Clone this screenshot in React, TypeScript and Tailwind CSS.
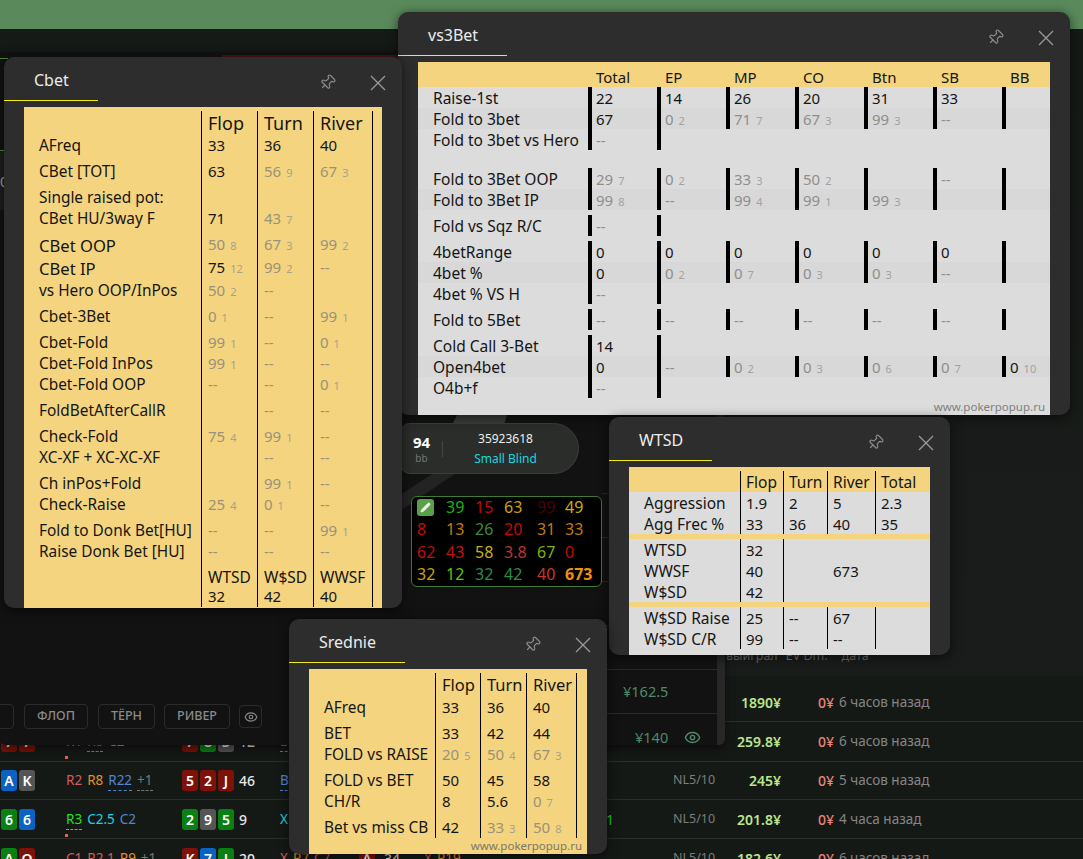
import { Eye, Pencil, Pin } from 'lucide-react';

type Stat = { v: string; s?: number; dim?: boolean } | null;
type Row = { label?: string; cells: Stat[]; gap?: boolean; big?: boolean; head?: string };

const v = (val: string): Stat => ({ v: val });
const d = (val: string, s?: number): Stat => ({ v: val, s, dim: true });
const dash = d('--');

const Close = () => (
  <svg width="16" height="16" viewBox="0 0 16 16" className="text-[#9a9a9a]">
    <path d="M1 1 15 15M15 1 1 15" stroke="currentColor" strokeWidth="1.3" fill="none" />
  </svg>
);

const Window = ({ title, className, children }: { title: string; className: string; children: React.ReactNode }) => (
  <div className={`absolute flex flex-col overflow-hidden rounded-[10px] bg-[#2d2d2d] shadow-[0_2px_12px_rgba(0,0,0,0.6)] ${className}`}>
    <div className="flex h-[44px] shrink-0 items-start justify-between">
      <div className="h-[44px] border-b border-[#f2ea1a] pt-[11px] pr-[29px] pl-[30px] text-[16px] leading-[24px] text-[#ececec]">{title}</div>
      <div className="flex items-center gap-[34px] pt-[17px] pr-[16px]">
        <Pin size={17} strokeWidth={1.6} className="rotate-45 text-[#8c8c8c]" />
        <Close />
      </div>
    </div>
    <div className="mx-[20px] mt-[6px] flex flex-1 flex-col overflow-hidden">{children}</div>
  </div>
);

const Value = ({ stat, gray }: { stat: Stat; gray?: boolean }) => {
  if (!stat) return null;
  const main = stat.dim ? (gray ? 'text-[#8e8e8e]' : 'text-[#98927a]') : 'text-[#151515]';
  return (
    <span className="text-[15px] whitespace-nowrap">
      <span className={main}>{stat.v}</span>
      {stat.s !== undefined && (
        <span className={`ml-[5px] text-[11px] ${gray ? 'text-[#a2a2a2]' : 'text-[#a9a28a]'}`}>{stat.s}</span>
      )}
    </span>
  );
};

/* yellow tables: Cbet and Srednie share the same row layout */
const StatTable = ({ rows, labelWidth, cols, children }: { rows: Row[]; labelWidth: string; cols: string[]; children?: React.ReactNode }) => (
  <div className="flex flex-1 flex-col bg-[#f4d47f] pt-[4px] text-[15.4px] leading-[21px] text-[#151515]">
    {rows.map((row, i) => {
      const gapClass = row.gap ? 'pt-[5px]' : '';
      const height = row.head
        ? 'h-[24px]'
        : row.big
          ? row.gap ? 'h-[28px]' : 'h-[23px]'
          : row.gap ? 'h-[26px]' : 'h-[21px]';
      return (
        <div key={i} className={`flex shrink-0 ${height}`}>
          <div className={`${labelWidth} shrink-0 pl-[15px] whitespace-nowrap ${gapClass} ${row.big ? 'text-[16.6px] leading-[23px]' : ''}`}>{row.label}</div>
          {row.cells.map((c, j) => (
            <div key={j} className={`${cols[j]} shrink-0 border-l border-black pl-[6px] whitespace-nowrap ${gapClass} ${row.head ?? ''}`}>
              {row.head ? c?.v : <Value stat={c} />}
            </div>
          ))}
          <div className="w-[11px] border-l border-black" />
        </div>
      );
    })}
    {children}
  </div>
);

const cbetRows: Row[] = [
  { cells: [v('Flop'), v('Turn'), v('River')], head: 'text-[18px] leading-[24px]' },
  { label: 'AFreq', cells: [v('33'), v('36'), v('40')] },
  { label: 'CBet [TOT]', cells: [v('63'), d('56', 9), d('67', 3)], gap: true },
  { label: 'Single raised pot:', cells: [null, null, null], gap: true },
  { label: 'CBet HU/3way F', cells: [v('71'), d('43', 7), null] },
  { label: 'CBet OOP', cells: [d('50', 8), d('67', 3), d('99', 2)], gap: true, big: true },
  { label: 'CBet IP', cells: [{ v: '75', s: 12 }, d('99', 2), dash], big: true },
  { label: 'vs Hero OOP/InPos', cells: [d('50', 2), dash, null] },
  { label: 'Cbet-3Bet', cells: [d('0', 1), dash, d('99', 1)], gap: true },
  { label: 'Cbet-Fold', cells: [d('99', 1), dash, d('0', 1)], gap: true },
  { label: 'Cbet-Fold InPos', cells: [d('99', 1), dash, dash] },
  { label: 'Cbet-Fold OOP', cells: [dash, dash, d('0', 1)] },
  { label: 'FoldBetAfterCallR', cells: [null, dash, dash], gap: true },
  { label: 'Check-Fold', cells: [d('75', 4), d('99', 1), dash], gap: true },
  { label: 'XC-XF + XC-XC-XF', cells: [null, dash, dash] },
  { label: 'Ch inPos+Fold', cells: [null, d('99', 1), dash], gap: true },
  { label: 'Check-Raise', cells: [d('25', 4), d('0', 1), dash] },
  { label: 'Fold to Donk Bet[HU]', cells: [dash, dash, d('99', 1)], gap: true },
  { label: 'Raise Donk Bet [HU]', cells: [dash, dash, dash] },
  { cells: [v('WTSD'), v('W$SD'), v('WWSF')], gap: true, head: 'text-[15.5px] leading-[21px]' },
  { cells: [v('32'), v('42'), v('40')] },
];

const srednieRows: Row[] = [
  { cells: [v('Flop'), v('Turn'), v('River')], head: 'text-[16.5px] leading-[24px]' },
  { label: 'AFreq', cells: [v('33'), v('36'), v('40')] },
  { label: 'BET', cells: [v('33'), v('42'), v('44')], gap: true },
  { label: 'FOLD vs RAISE', cells: [d('20', 5), d('50', 4), d('67', 3)] },
  { label: 'FOLD vs BET', cells: [v('50'), v('45'), v('58')], gap: true },
  { label: 'CH/R', cells: [v('8'), v('5.6'), d('0', 7)] },
  { label: 'Bet vs miss CB', cells: [v('42'), d('33', 3), d('50', 8)], gap: true },
];

/* ---- WTSD ---- */
const wtsdCols = ['w-[43px]', 'w-[44px]', 'w-[48px]', 'flex-1'];
const WtsdRow = ({ label, cells, lines = 4 }: { label?: string; cells: Stat[]; lines?: number }) => (
  <div className="flex h-[21px] leading-[23px]">
    <div className="w-[111px] shrink-0 pl-[15px]">{label}</div>
    {wtsdCols.map((w, j) => (
      <div key={j} className={`${w} border-l pl-[5px] ${j < lines ? 'border-black' : 'border-transparent'}`}>
        <Value stat={cells[j]} gray />
      </div>
    ))}
  </div>
);

const WtsdTable = () => (
  <div className="flex-1 bg-[#dcdcdc] text-[15.5px] leading-[21px] text-[#151515]">
    <div className="flex h-[25px] bg-[#f4d47f] pt-[4px] text-[15.5px] leading-[23px]">
      <div className="w-[111px] shrink-0" />
      {['Flop', 'Turn', 'River', 'Total'].map((h, j) => (
        <div key={h} className={`${wtsdCols[j]} border-l border-black pl-[5px]`}>{h}</div>
      ))}
    </div>
    <WtsdRow label="Aggression" cells={[v('1.9'), v('2'), v('5'), v('2.3')]} />
    <WtsdRow label="Agg Frec %" cells={[v('33'), v('36'), v('40'), v('35')]} />
    <div className="h-[5px] bg-[#f4d47f]" />
    <WtsdRow label="WTSD" cells={[v('32')]} lines={2} />
    <WtsdRow label="WWSF" cells={[v('40'), null, v('673')]} lines={2} />
    <WtsdRow label="W$SD" cells={[v('42')]} lines={2} />
    <div className="h-[5px] bg-[#f4d47f]" />
    <WtsdRow label="W$SD Raise" cells={[v('25'), v('--'), v('67')]} />
    <WtsdRow label="W$SD C/R" cells={[v('99'), v('--'), v('--')]} />
  </div>
);

/* ---- vs3Bet ---- */
type BetRow = { label: string; cells: Stat[]; bars?: number };
const betGroups: { rows: BetRow[]; mt: string }[] = [
  {
    mt: '',
    rows: [
      { label: 'Raise-1st', cells: [v('22'), v('14'), v('26'), v('20'), v('31'), v('33')] },
      { label: 'Fold to 3bet', cells: [v('67'), d('0', 2), d('71', 7), d('67', 3), d('99', 3), dash] },
      { label: 'Fold to 3bet vs Hero', cells: [dash], bars: 2 },
    ],
  },
  {
    mt: 'mt-[18px]',
    rows: [
      { label: 'Fold to 3Bet OOP', cells: [d('29', 7), d('0', 2), d('33', 3), d('50', 2), null, dash] },
      { label: 'Fold to 3Bet IP', cells: [d('99', 8), dash, d('99', 4), d('99', 1), d('99', 3)] },
    ],
  },
  { mt: 'mt-[5px]', rows: [{ label: 'Fold vs Sqz R/C', cells: [dash], bars: 2 }] },
  {
    mt: 'mt-[5px]',
    rows: [
      { label: '4betRange', cells: [v('0'), v('0'), v('0'), v('0'), v('0'), v('0')] },
      { label: '4bet %', cells: [v('0'), d('0', 2), d('0', 7), d('0', 3), d('0', 3), dash] },
      { label: '4bet % VS H', cells: [dash], bars: 2 },
    ],
  },
  { mt: 'mt-[5px]', rows: [{ label: 'Fold to 5Bet', cells: [dash, dash, dash, dash, dash, dash] }] },
  {
    mt: 'mt-[5px]',
    rows: [
      { label: 'Cold Call 3-Bet', cells: [v('14')], bars: 2 },
      { label: 'Open4bet', cells: [v('0'), dash, d('0', 2), d('0', 3), d('0', 6), d('0', 7), { v: '0', s: 10 }] },
      { label: 'O4b+f', cells: [dash], bars: 2 },
    ],
  },
];

const BetTable = () => (
  <div className="flex flex-1 flex-col bg-[#dcdcdc] text-[15.5px] leading-[23px] text-[#151515]">
    <div className="flex h-[25px] bg-[#f4d47f] pt-[4px] text-[15px]">
      <div className="w-[178px] shrink-0" />
      {['Total', 'EP', 'MP', 'CO', 'Btn', 'SB', 'BB'].map((h) => (
        <div key={h} className="w-[69px] shrink-0">{h}</div>
      ))}
    </div>
    {betGroups.map((g, i) => (
      <div key={i} className={g.mt}>
        {g.rows.map((row, r) => (
          <div key={r} className={`flex h-[21px] ${r % 2 ? 'bg-[#d8d8d8]' : ''}`}>
            <div className="w-[170px] shrink-0 pl-[15px] whitespace-nowrap">{row.label}</div>
            {[0, 1, 2, 3, 4, 5, 6].map((j) => (
              <div key={j} className={`w-[69px] shrink-0 border-l-4 pl-[4px] ${j < (row.bars ?? 7) ? 'border-black' : 'border-transparent'}`}>
                <Value stat={row.cells[j] ?? null} gray />
              </div>
            ))}
          </div>
        ))}
      </div>
    ))}
    <div className="mt-auto pr-[5px] text-right text-[11.5px] leading-[16px] text-[#808080]">www.pokerpopup.ru</div>
  </div>
);

/* ---- background ---- */
const cardBg: Record<string, string> = {
  r: 'bg-[#7e1208]',
  g: 'bg-[#0a8012]',
  b: 'bg-[#0a62c2]',
  k: 'bg-[#555555]',
};

const Cards = ({ list }: { list: string[] }) => (
  <div className="flex gap-[2px]">
    {list.map((c, i) => (
      <div key={i} className={`flex h-[21px] w-[16px] items-center justify-center rounded-[3px] text-[14px] font-semibold text-white ${cardBg[c[0]]}`}>
        {c[1]}
      </div>
    ))}
  </div>
);

type Act = { t: string; c: string; dashed?: string };
const Acts = ({ list, mark }: { list: Act[]; mark?: boolean }) => (
  <div className="relative flex gap-[5px] text-[13.5px]">
    {mark && <div className="absolute top-[-14px] left-[-1px] h-[3px] w-[3px] bg-[#f05a5a]" />}
    {list.map((a, i) => (
      <span key={i} className={`${a.c} ${a.dashed ? `border-b border-dashed ${a.dashed}` : ''} leading-[20px]`}>{a.t}</span>
    ))}
  </div>
);

type Hand = {
  h: string;
  hole: string[];
  acts: Act[];
  board: string[];
  pot?: string;
  turn: Act[];
  mark?: boolean;
  tail?: string;
  river?: string[];
  riverPot?: string;
  riverActs?: Act[];
  stake?: string;
  win: string;
  date: string;
};

const hands: Hand[] = [
  { h: 'h-[46px] pt-[8px]', hole: [], acts: [], board: [], turn: [], win: '1890¥', date: '6 часов назад' },
  {
    h: 'h-[40px]', hole: ['r7', 'r7'],
    acts: [
      { t: 'R1', c: 'text-[#b8a838]' },
      { t: 'R8', c: 'text-[#4f86d6]', dashed: 'border-[#4f86d6]' },
      { t: 'C2', c: 'text-[#b8a838]' },
    ],
    board: ['r7', 'g8', 'k3'], pot: '12', turn: [{ t: 'B2', c: 'text-[#4f86d6]', dashed: 'border-[#4f86d6]' }],
    stake: 'NL5/10', win: '259.8¥', date: '6 часов назад',
  },
  {
    h: 'h-[38px]', hole: ['bA', 'kK'], mark: true,
    acts: [
      { t: 'R2', c: 'text-[#d65c5c]' },
      { t: 'R8', c: 'text-[#e0902a]' },
      { t: 'R22', c: 'text-[#4f86d6]', dashed: 'border-[#4f86d6]' },
      { t: '+1', c: 'text-[#777777]', dashed: 'border-[#777777]' },
    ],
    board: ['r5', 'r2', 'rJ'], pot: '46', turn: [{ t: 'B1', c: 'text-[#4f86d6]', dashed: 'border-[#4f86d6]' }],
    stake: 'NL5/10', win: '245¥', date: '5 часов назад',
  },
  {
    h: 'h-[39px]', hole: ['g6', 'b6'],
    acts: [
      { t: 'R3', c: 'text-[#22e022]', dashed: 'border-[#22e022]' },
      { t: 'C2.5', c: 'text-[#19d6e0]' },
      { t: 'C2', c: 'text-[#4f86d6]' },
    ],
    board: ['g2', 'k9', 'g5'], pot: '9', turn: [{ t: 'X', c: 'text-[#19d6e0]' }], tail: '1',
    stake: 'NL5/10', win: '201.8¥', date: '4 часа назад',
  },
  {
    h: 'h-[39px]', hole: ['gA', 'rQ'], mark: true,
    acts: [
      { t: 'C1', c: 'text-[#d65c5c]' },
      { t: 'R2.1', c: 'text-[#d65c5c]' },
      { t: 'R9', c: 'text-[#e0902a]' },
      { t: '+1', c: 'text-[#777777]' },
    ],
    board: ['rK', 'b7', 'gJ'], pot: '20',
    turn: [
      { t: 'X', c: 'text-[#d65c5c]' },
      { t: 'R7', c: 'text-[#e0902a]' },
      { t: 'C7', c: 'text-[#d65c5c]' },
    ],
    river: ['rA'], riverPot: '34',
    riverActs: [
      { t: 'X', c: 'text-[#d65c5c]' },
      { t: 'R19', c: 'text-[#e0902a]' },
    ],
    stake: 'NL5/10', win: '182.6¥', date: '6 часов назад',
  },
];

const HandRow = ({ hand }: { hand: Hand }) => (
  <div className={`flex shrink-0 items-center border-b border-[#2a2e2b] pl-[1px] text-[14px] ${hand.h}`}>
    <div className="w-[65px]"><Cards list={hand.hole} /></div>
    <div className="w-[116px]"><Acts list={hand.acts} mark={hand.mark} /></div>
    <div className="w-[57px]"><Cards list={hand.board} /></div>
    <div className="w-[41px] font-medium text-[#e8e8e8]">{hand.pot}</div>
    <div className="w-[79px]"><Acts list={hand.turn} /></div>
    <div className="w-[25px]">{hand.river && <Cards list={hand.river} />}</div>
    <div className="w-[40px] text-[#e8e8e8]">{hand.riverPot}</div>
    <div className="flex w-[190px] justify-between">
      <Acts list={hand.riverActs ?? []} />
      {hand.tail && <span className="text-[#12d012]">{hand.tail}</span>}
    </div>
    <div className="w-[59px]" />
    <div className="w-[60px] text-[12.5px] text-[#7d7d7d]">{hand.stake}</div>
    <div className="w-[48px] text-right font-semibold text-[#bde58a]">{hand.win}</div>
    <div className="ml-[37px] w-[14px] font-medium text-[#e9857a]">0¥</div>
    <div className="ml-[7px] text-[13.5px] whitespace-nowrap text-[#858585]">{hand.date}</div>
  </div>
);

const hud = [
  [null, ['39', 'text-[#20b010]'], ['15', 'text-[#c00808]'], ['63', 'text-[#c8a010]'], ['99', 'text-[#4d0000]'], ['49', 'text-[#c8b010]']],
  [['8', 'text-[#c20b0b]'], ['13', 'text-[#c07a10]'], ['26', 'text-[#3a8a3a]'], ['20', 'text-[#c80808]'], ['31', 'text-[#c07a10]'], ['33', 'text-[#c07a10]']],
  [['62', 'text-[#c20b0b]'], ['43', 'text-[#c01515]'], ['58', 'text-[#c8b010]'], ['3.8', 'text-[#b83535]'], ['67', 'text-[#7db010]'], ['0', 'text-[#c20b0b]']],
  [['32', 'text-[#c8a010]'], ['12', 'text-[#5cc010]'], ['32', 'text-[#2f8a4f]'], ['42', 'text-[#2f8a4f]'], ['40', 'text-[#c0392b]'], ['673', 'font-bold text-[#f09010]']],
];

const Modal = () => (
  <div className="absolute top-[52px] left-0 flex h-[693px] w-[725px] rounded-b-[6px] bg-[#111211] shadow-[0_4px_10px_rgba(0,0,0,0.5)]">
    <div className="flex flex-1 flex-col">
      <div className="relative flex-1">
        {/* table felt bits */}
        <div className="absolute top-[6px] left-0 h-px w-[8px] bg-[#4f8a3a]" />
        <div className="absolute top-[3px] left-[222px] h-[3px] w-[180px] bg-[#4a1518]" />
        <div className="absolute top-[98px] left-0 h-[60px] w-[8px] border-t border-[#4f8a3a] bg-[#1d1e1d] text-[15px] leading-[60px] text-[#aaaaaa]">0</div>
        <svg width="200" height="110" viewBox="0 0 200 110" className="absolute top-[363px] left-[400px]">
          <path d="M57 0H107L104 10H52Z" fill="#3a3a3a" />
          <path d="M0 96 56 58H34L0 80Z" fill="#232323" />
        </svg>
        {/* seat */}
        <div className="absolute top-[371px] left-[400px] flex h-[51px] w-[179px] items-center rounded-r-[26px] rounded-l-[10px] border border-[#3a3d3a] bg-[#2a2d2a]">
          <div className="flex w-[41px] flex-col items-center">
            <span className="text-[15px] leading-[18px] font-bold text-white">94</span>
            <span className="text-[10px] leading-[14px] text-[#777777]">bb</span>
          </div>
          <div className="h-[16px] w-px bg-[#444744]" />
          <div className="flex flex-1 flex-col items-center pr-[10px] text-[12px] leading-[20px]">
            <span className="text-[#eeeeee]">35923618</span>
            <span className="text-[#19d6e0]">Small Blind</span>
          </div>
        </div>
        {/* hud */}
        <div className="absolute top-[444px] left-[411px] grid h-[91px] w-[191px] grid-cols-[29px_29px_29px_33px_28px_1fr] grid-rows-4 rounded-[6px] border border-[#3f7a36] bg-black pl-[5px] text-[16px] leading-[21px]">
          {hud.flat().map((c, i) =>
            c ? (
              <span key={i} className={c[1] as string}>{c[0]}</span>
            ) : (
              <span key={i} className="mt-[2px] flex h-[17px] w-[17px] items-center justify-center rounded-[3px] bg-[#5a9f4a]">
                <Pencil size={11} fill="#e8f2e4" strokeWidth={1.5} className="text-[#e8f2e4]" />
              </span>
            ),
          )}
        </div>
      </div>
      {/* street buttons */}
      <div className="flex h-[41px] shrink-0 items-start gap-[10px] pb-[16px] text-[12.5px] font-medium text-[#8a8a8a]">
        <div className="-ml-[10px] h-[25px] w-[24px] rounded-[4px] border border-[#2b2b2b]" />
        <div className="flex h-[25px] w-[64px] items-center justify-center rounded-[4px] border border-[#2b2b2b]">ФЛОП</div>
        <div className="flex h-[25px] w-[57px] items-center justify-center rounded-[4px] border border-[#2b2b2b]">ТЁРН</div>
        <div className="-ml-px flex h-[25px] w-[66px] items-center justify-center rounded-[4px] border border-[#2b2b2b]">РИВЕР</div>
        <div className="-ml-px mt-[1px] flex h-[23px] w-[23px] items-center justify-center rounded-[4px] border border-[#2b2b2b]">
          <Eye size={14} />
        </div>
      </div>
    </div>
    {/* players list */}
    <div className="flex w-[115px] flex-col justify-end text-[14.5px] text-[#4f8a6a]">
      <div className="h-[44px] border-t border-[#262626]" />
      <div className="h-[44px] border-t border-[#262626]" />
      <div className="h-[44px] border-t border-[#262626]" />
      <div className="h-[44px] border-t border-[#262626]" />
      <div className="flex h-[44px] items-center border-t border-[#2a2a2a] pl-[21px]">¥162.5</div>
      <div className="flex h-[32px] items-start gap-[16px] border-t border-[#2a2a2a] pt-[12px] pl-[33px] leading-[22px]">
        ¥140
        <Eye size={17} className="mt-[3px] shrink-0" />
      </div>
    </div>
    <div className="w-[8px] rounded-br-[6px] bg-[#272727]" />
  </div>
);

export default function App() {
  return (
    <div className="relative flex h-[859px] w-[1083px] flex-col overflow-hidden bg-[#151916] font-['Noto_Sans',sans-serif]">
      <div className="h-[29px] shrink-0 bg-[#5a8a5c]" />
      <div className="h-[647px] shrink-0 bg-gradient-to-b from-[#161a17] to-[#191c1a] pt-[618px] pl-[726px] text-[12.5px] text-[#6a6a6a]">
        <span>выиграл</span>
        <span className="ml-[8px] text-[#1f8fcf]">E</span>
        <span>V Dm.</span>
        <span className="ml-[14px]">дата</span>
      </div>
      {hands.map((h, i) => (
        <HandRow key={i} hand={h} />
      ))}

      <span className="absolute top-[50px] left-[5px] h-[2px] overflow-hidden text-[13px] leading-[14px] tracking-[1px] text-[#b8b8b8]">10 09 2024 10:39</span>
      <Modal />

      <Window title="vs3Bet" className="top-[12px] left-[398px] h-[403px] w-[672px]"><BetTable /></Window>
      <Window title="Cbet" className="top-[57px] left-[4px] h-[551px] w-[398px]">
        <StatTable rows={cbetRows} labelWidth="w-[177px]" cols={['w-[56px]', 'w-[56px]', 'w-[59px]']} />
      </Window>
      <Window title="WTSD" className="top-[417px] left-[609px] h-[238px] w-[341px]"><WtsdTable /></Window>
      <Window title="Srednie" className="top-[619px] left-[289px] h-[235px] w-[318px]">
        <StatTable rows={srednieRows} labelWidth="w-[126px]" cols={['w-[45px]', 'w-[46px]', 'w-[50px]']}>
          <div className="mt-auto pr-[5px] pb-px text-right text-[11.5px] leading-[16px] text-[#7d7868]">www.pokerpopup.ru</div>
        </StatTable>
      </Window>
    </div>
  );
}
